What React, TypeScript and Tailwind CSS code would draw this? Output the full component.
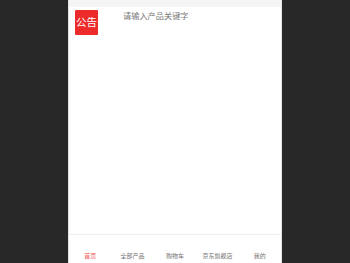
import React from "react";

export default function App() {
  const tabs = ["首页", "全部产品", "购物车", "京东旗舰店", "我的"];
  return (
    <div
      className="w-[350px] h-[263px] bg-[#282828] flex justify-center overflow-hidden"
      style={{ fontFamily: '"Noto Sans CJK SC", "Noto Sans", sans-serif' }}
    >
      <div className="w-[214px] h-[263px] bg-white border-x border-[#e4e4e4] flex flex-col">
        <div className="h-[7px] bg-[#f5f5f5] shrink-0" />
        <div className="flex items-start pl-[6px] pt-[3px]">
          <div className="w-[23px] h-[25px] bg-[#ee2b2b] rounded-[1px] flex items-center justify-center text-white text-[10.5px] leading-none">
            公告
          </div>
          <div className="ml-[25px] mt-[0px] text-[8.2px] leading-[11px] text-[#7a7a7a]">
            请输入产品关键字
          </div>
        </div>
        <div className="flex-1" />
        <div className="h-[29px] border-t border-[#eeeeee] grid grid-cols-5 items-end pb-[3px] shrink-0">
          {tabs.map((t, i) => (
            <div
              key={t}
              className={
                "text-center text-[6px] leading-[9px] " +
                (i === 0 ? "text-[#f55a5a]" : "text-[#777777]")
              }
            >
              {t}
            </div>
          ))}
        </div>
      </div>
    </div>
  );
}
